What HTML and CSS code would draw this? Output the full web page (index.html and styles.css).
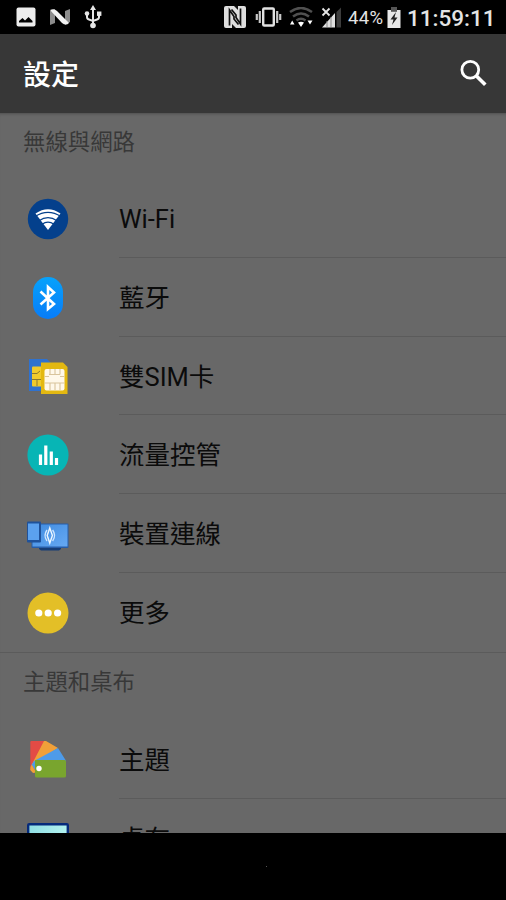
FILE: index.html
```html
<!DOCTYPE html>
<html lang="zh-Hant">
<head>
    <meta charset="UTF-8">
    <meta name="viewport" content="width=device-width, initial-scale=1.0">
    <title>設定</title>
    <link rel="stylesheet" href="styles.css">
</head>
<body>
    <div class="phone">
        <div class="status-bar">
            <div class="status-left">
                <svg width="20" height="20" viewBox="0 0 20 20">
                    <rect x="0.5" y="0.5" width="19" height="19" rx="2" fill="#ececec"/>
                    <path d="M3 15.5 V14 L6.5 11 L9 13.5 L12.5 10 L16.5 14 V15.5 Z" fill="#000"/>
                </svg>
                <svg width="22" height="18" viewBox="0 0 22 18">
                    <path d="M1 3 L6 1 V15 L1 17 Z M16 3 L21 1 V14 L16 17 Z" fill="#8c8c8c"/>
                    <path d="M1 2 Q5 0 8 3 L20 15 Q17 18 13 15 Z" fill="#f2f2f2"/>
                </svg>
                <svg width="18" height="24" viewBox="0 0 18 24">
                    <path d="M9 4 V20 M3 8 V12 Q3 14 5 14.5 L9 16 L13 14.5 Q15 14 15 12 V8" fill="none" stroke="#e6e6e6" stroke-width="2"/>
                    <path d="M9 0 L12 5 H6 Z" fill="#e6e6e6"/>
                    <circle cx="3" cy="8.5" r="2.3" fill="#e6e6e6"/>
                    <rect x="13" y="6.5" width="4.4" height="4.4" fill="#e6e6e6"/>
                    <circle cx="9" cy="20.5" r="2.8" fill="#e6e6e6"/>
                </svg>
            </div>
            <div class="status-right">
                <svg class="nfc" width="24" height="24" viewBox="0 0 24 24">
                    <rect x="1" y="1" width="22" height="22" rx="2" fill="#dedede"/>
                    <path d="M6.5 20.5 V5 L11 11.5 V14 L15.5 19.5 M17.5 3.5 V19 L13 12.5 V10 L8.5 4.5" fill="none" stroke="#111" stroke-width="1.7"/>
                    <path d="M9 23 V19 L13 23 Z M11 1 H15 V5 Z" fill="#111"/>
                </svg>
                <svg class="vibrate" width="27" height="20" viewBox="0 0 27 20">
                    <rect x="8.2" y="1.5" width="10.6" height="17" rx="1" fill="none" stroke="#e2e2e2" stroke-width="2.4"/>
                    <path d="M4.8 4 V16 M22.2 4 V16 M1.8 7 V13 M25.2 7 V13" fill="none" stroke="#c8c8c8" stroke-width="2.2"/>
                </svg>
                <svg class="wifi" width="24" height="20" viewBox="0 0 24 20">
                    <path d="M1 5 Q12 -3 23 5 M4 9.5 Q12 3.5 20 9.5 M7.5 13.5 Q12 10 16.5 13.5" fill="none" stroke="#505050" stroke-width="2.5"/>
                    <path d="M12 20 L9 15.5 Q12 14 15 15.5 Z M1 17.5 L3.2 13.5 L5.5 17.5 Z M18.5 13.5 H23.5 L21 17.5 Z" fill="#fff"/>
                </svg>
                <svg class="signal" width="21" height="21" viewBox="0 0 21 21">
                    <path d="M1 20.5 L14 6 V20.5 Z" fill="#e0e0e0"/>
                    <path d="M15.5 5 L20 0.5 V20.5 H15.5 Z" fill="#3c3c3c"/>
                    <path d="M6 14 V20 M10 10 V20" stroke="#888" stroke-width="1"/>
                    <path d="M1.5 1.5 L8.5 8.5 M8.5 1.5 L1.5 8.5" stroke="#e6e6e6" stroke-width="1.8"/>
                </svg>
                <span class="percent">44%</span>
                <svg class="battery" width="14" height="21" viewBox="0 0 14 21">
                    <path d="M4 0 H10 V4 H4 Z" fill="#555"/>
                    <path d="M0.5 3 H4 V4.5 H10 V3 H13.5 V21 H0.5 Z" fill="#e8e8e8"/>
                    <path d="M9 5 L3.5 12.5 H6.5 L5 18 L10.5 10.5 H7.5 Z" fill="#222"/>
                </svg>
                <span class="clock">11:59:11</span>
            </div>
        </div>

        <div class="app-bar">
            <h1>設定</h1>
            <svg width="28" height="28" viewBox="0 0 28 28">
                <circle cx="10.3" cy="9.8" r="8.4" fill="none" stroke="#fff" stroke-width="2.8"/>
                <path d="M16.2 15.7 L25.3 24.8" stroke="#fff" stroke-width="3.6"/>
            </svg>
        </div>

        <div class="content">
            <!-- Wireless & networks -->
            <div class="section">
                <h2>無線與網路</h2>
                <div class="row">
                    <svg class="icon" viewBox="0 0 42 42">
                        <circle cx="21" cy="21" r="20.2" fill="#04408c"/>
                        <path d="M21 32 L8.5 15.5 Q21 7 33.5 15.5 Z" fill="#fff"/>
                        <path d="M8 18.6 Q21 10 34 18.6 M12 22.8 Q21 16.5 30 22.8 M15 26.2 Q21 22 27 26.2" fill="none" stroke="#04408c" stroke-width="1.2"/>
                    </svg>
                    <div class="label">Wi-Fi</div>
                </div>
                <div class="row">
                    <svg class="icon" viewBox="0 0 42 42">
                        <defs>
                            <linearGradient id="bt" x1="0" y1="0" x2="0" y2="1">
                                <stop offset="0" stop-color="#06a2fb"/>
                                <stop offset="1" stop-color="#087cf8"/>
                            </linearGradient>
                        </defs>
                        <rect x="6" y="0" width="30" height="42" rx="15" fill="url(#bt)"/>
                        <path d="M13.5 14.5 L27 27 L21 32 V10 L27 15.5 L13.5 27.5" fill="none" stroke="#fff" stroke-width="2.6"/>
                    </svg>
                    <div class="label">藍牙</div>
                </div>
                <div class="row">
                    <svg class="icon" viewBox="0 0 42 42">
                        <path d="M2 3 H20 L25 8 V35 H2 Z" fill="#2f72cf"/>
                        <rect x="5" y="10.5" width="12" height="20" rx="1" fill="#f0ca2c"/>
                        <path d="M5 17.5 H10 L13 15 M5 23.5 H15 M10 23.5 V30" fill="none" stroke="#8a7a30" stroke-width="1"/>
                        <path d="M14 6.5 H36 L40.5 11 V38 H14 Z" fill="#e3b811"/>
                        <rect x="17.5" y="13" width="20" height="21.5" rx="2" fill="#fff8ea"/>
                        <path d="M22 18.5 H33 M23 13 V18.5 M28 13 V18.5 M33 13 V18.5 M17.5 20.5 H22 M33 20.5 H37.5 M17.5 27 H37.5 M23 27 V34 M28 27 V34 M33 27 V34" fill="none" stroke="#d9c49c" stroke-width="1.1"/>
                    </svg>
                    <div class="label">雙SIM卡</div>
                </div>
                <div class="row">
                    <svg class="icon" viewBox="0 0 42 42">
                        <circle cx="21" cy="21" r="20.6" fill="#07b5b5"/>
                        <path d="M13.5 20.5 V31 M18.8 11.5 V31 M24.3 17.5 V31 M29.5 24 V31" fill="none" stroke="#fff" stroke-width="3.2"/>
                    </svg>
                    <div class="label">流量控管</div>
                </div>
                <div class="row">
                    <svg class="icon" viewBox="0 0 42 42">
                        <defs>
                            <linearGradient id="screen" x1="0" y1="0" x2="1" y2="1">
                                <stop offset="0" stop-color="#3f8be0"/>
                                <stop offset="1" stop-color="#66a9f3"/>
                            </linearGradient>
                        </defs>
                        <path d="M12 34 H34 V36 L32 37.5 H14 L12 36 Z" fill="#173d75"/>
                        <rect x="4.5" y="10.5" width="37" height="24.5" rx="1" fill="#275da8"/>
                        <rect x="5.5" y="11.5" width="35" height="22" fill="url(#screen)"/>
                        <rect x="0" y="8.5" width="14" height="21" rx="1" fill="#1f529b"/>
                        <rect x="1" y="10.5" width="11" height="16.5" fill="#5ba1ef"/>
                        <path d="M20 17 Q16 22.5 20 28 M25.6 17 Q29.6 22.5 25.6 28" fill="none" stroke="#cfe6ff" stroke-width="1.4"/>
                        <path d="M22.8 15 L25.4 22.5 L22.8 30 L20.2 22.5 Z" fill="none" stroke="#eef7ff" stroke-width="1.4"/>
                    </svg>
                    <div class="label">裝置連線</div>
                </div>
                <div class="row">
                    <svg class="icon" viewBox="0 0 42 42">
                        <circle cx="21" cy="21" r="20.5" fill="#e3bf27"/>
                        <circle cx="11.8" cy="21" r="3.6" fill="#fff"/>
                        <circle cx="21.2" cy="21" r="3.6" fill="#fff"/>
                        <circle cx="30.6" cy="21" r="3.6" fill="#fff"/>
                    </svg>
                    <div class="label">更多</div>
                </div>
            </div>

            <!-- Themes & wallpaper -->
            <div class="section">
                <h2>主題和桌布</h2>
                <div class="row">
                    <svg class="icon" viewBox="0 0 42 42">
                        <path d="M3.3 3 Q3.3 2 4.3 2 H18 L8 33.5 L3.3 31 Z" fill="#e34b45"/>
                        <path d="M17 2 H19 L31 9 L8 24 L3.5 28 Z" fill="#f0a039"/>
                        <path d="M31 9 L38.5 21 V24 L10 34 L4.5 26 L7 22 Z" fill="#4e9be8"/>
                        <path d="M3.5 28 L5 26 L9 33.5 L6 34 L3.3 31 Z" fill="#f0a039"/>
                        <path d="M8 21 H37.5 Q39 21 39 22.5 V37 Q39 38.5 37.5 38.5 H9.5 Q8 38.5 8 37 Z" fill="#79a52e"/>
                        <circle cx="12" cy="29.5" r="2.7" fill="#fff"/>
                    </svg>
                    <div class="label">主題</div>
                </div>
                <div class="row">
                    <svg class="icon" viewBox="0 0 42 42">
                        <defs>
                            <linearGradient id="wall" x1="0" y1="0" x2="1" y2="0">
                                <stop offset="0" stop-color="#8fdee4"/>
                                <stop offset="1" stop-color="#b2f2ef"/>
                            </linearGradient>
                        </defs>
                        <rect x="1.2" y="6.2" width="39.6" height="29" rx="1" fill="url(#wall)" stroke="#052a7b" stroke-width="2.4"/>
                    </svg>
                    <div class="label">桌布</div>
                </div>
            </div>
        </div>

        <div class="nav-bar">
            <span class="nav-dot"></span>
        </div>
    </div>
</body>
</html>
```
FILE: styles.css
```css
* {
    box-sizing: border-box;
}
body {
    margin: 0;
    background-color: #000;
    font-family: Roboto, "Noto Sans CJK TC", sans-serif;
}
.phone {
    display: flex;
    flex-direction: column;
    width: 506px;
    height: 900px;
    overflow: hidden;
}
.status-bar {
    display: flex;
    flex: none;
    justify-content: space-between;
    height: 34px;
    padding: 0 12px 0 16px;
    background-color: #000;
    color: #e4e4e4;
}
.status-left, .status-right {
    display: flex;
    align-items: center;
}
.status-left {
    gap: 13px;
}
.nfc {
    margin-right: 8px;
}
.vibrate {
    margin-right: 7px;
}
.wifi {
    margin-right: 8px;
}
.signal {
    margin-right: 6px;
}
.percent {
    width: 36px;
    margin-right: 3px;
    padding-top: 2px;
    font-size: 18.5px;
    letter-spacing: 0.3px;
    white-space: nowrap;
}
.battery {
    margin-right: 6px;
}
.clock {
    width: 87px;
    padding-top: 2px;
    font-size: 22.5px;
    font-weight: 500;
    white-space: nowrap;
}
.app-bar {
    display: flex;
    flex: none;
    align-items: center;
    justify-content: space-between;
    height: 79px;
    padding: 0 18px 0 23px;
    background-color: #373737;
    color: #fff;
}
h1 {
    margin: 0;
    padding-top: 4px;
    font-size: 28px;
    font-weight: 500;
    line-height: 40px;
}
.content {
    flex: none;
    height: 720px;
    overflow: hidden;
    background-color: #686868;
    box-shadow: inset 0 3px 3px -2px #505050;
}
.section + .section {
    border-top: 1px solid #5b5b5b;
}
h2 {
    height: 66.4px;
    margin: 0;
    padding: 13px 23px 0;
    color: #383838;
    font-size: 22.4px;
    font-weight: 400;
    line-height: 32px;
}
.section + .section h2 {
    height: 67.6px;
}
.row {
    display: flex;
    align-items: center;
    height: 78.7px;
    padding-left: 27px;
}
.icon {
    flex: none;
    width: 42px;
    height: 42px;
    margin: 1px 50px 0 0;
}
.label {
    flex: 1;
    height: 100%;
    border-bottom: 1px solid #5b5b5b;
    color: #0b0b0b;
    font-size: 25.5px;
    line-height: 81px;
}
.row:last-child .label {
    border-bottom: none;
}
.nav-bar {
    display: flex;
    flex: 1;
    align-items: center;
    justify-content: center;
    padding-left: 27px;
    background-color: #000;
}
.nav-dot {
    width: 1px;
    height: 1px;
    background-color: #555;
}
```
